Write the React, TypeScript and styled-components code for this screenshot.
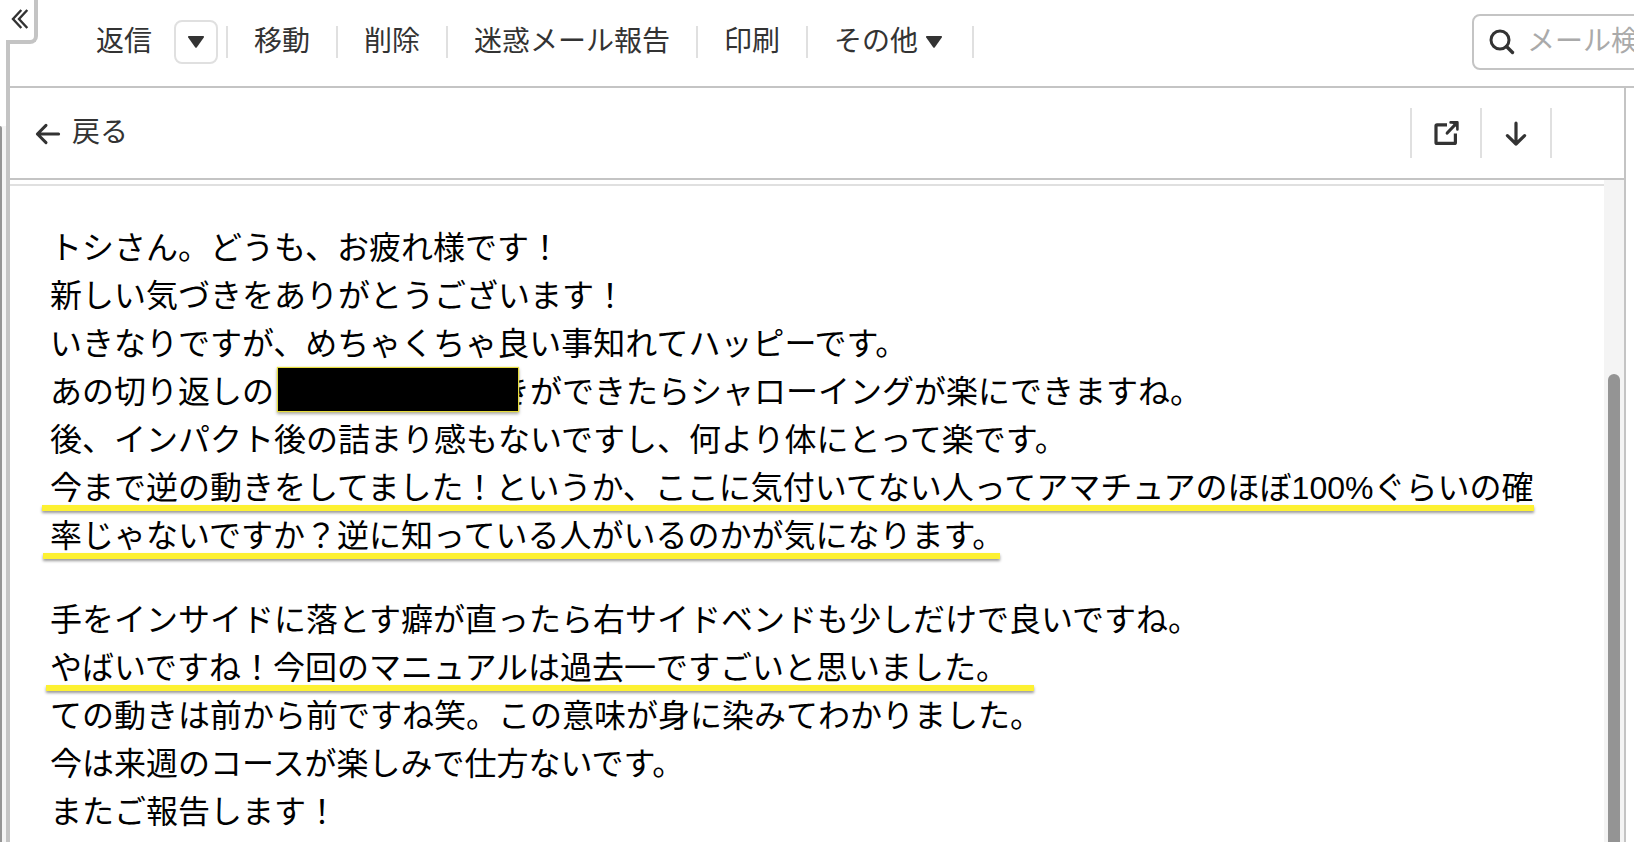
import React from "react";
import styled, { createGlobalStyle } from "styled-components";

const line = "#c4c4c4";
const faint = "#e0e0e0";
const ink = "#333333";

const GlobalStyle = createGlobalStyle`
  *, *::before, *::after { box-sizing: border-box; }
  body {
    margin: 0;
    background: #fff;
    overflow: hidden;
    font-family: "Liberation Sans", "Noto Sans CJK JP", sans-serif;
  }
`;

const Page = styled.div`
  position: relative;
  display: flex;
  height: 100vh;
  overflow: hidden;
`;

const FolderRail = styled.aside`
  flex: 0 0 6px;
  display: flex;
  padding-top: 126px;
`;

const FolderThumb = styled.div`
  flex: 0 0 2px;
  background: #949494;
  border-top-right-radius: 2px;
`;

const FolderTrack = styled.div`
  flex: 1;
  background: #f4f4f4;
`;

const CollapseButton = styled.button`
  position: absolute;
  top: 0;
  left: 6px;
  z-index: 1;
  width: 32px;
  height: 44px;
  padding: 0 4px 2px 5px;
  border: 0 solid ${line};
  border-width: 0 4px 4px 0;
  border-bottom-right-radius: 8px;
  background: #fff;
  color: ${ink};
  svg { display: block; }
`;

const Main = styled.main`
  flex: 1;
  min-width: 0;
  display: flex;
  flex-direction: column;
  border-left: 4px solid ${line};
`;

const Toolbar = styled.header`
  flex: 0 0 88px;
  display: flex;
  align-items: center;
  padding: 0 0 2px 60px;
  border-bottom: 2px solid ${line};
`;

const ToolButton = styled.button<{ $menu?: boolean }>`
  display: flex;
  align-items: center;
  gap: 8px;
  padding: 0 ${(p) => (p.$menu ? 30 : 26)}px 0 26px;
  border: 0;
  background: none;
  color: ${ink};
  font: inherit;
  font-size: 28px;
  line-height: 40px;
  white-space: nowrap;
`;

const Divider = styled.span<{ $height: number }>`
  flex: 0 0 2px;
  height: ${(p) => p.$height}px;
  background: ${faint};
`;

const MenuButton = styled.button`
  display: flex;
  align-items: center;
  justify-content: center;
  width: 44px;
  height: 44px;
  margin: 0 8px 0 -4px;
  padding: 0;
  border: 2px solid ${faint};
  border-radius: 8px;
  background: #fff;
  color: ${ink};
`;

const SearchSlot = styled.div`
  flex: 0 0 162px;
  margin-left: auto;
  overflow: hidden;
`;

const SearchBox = styled.label`
  display: flex;
  align-items: center;
  gap: 12px;
  width: 400px;
  height: 56px;
  padding: 0 15px;
  border: 2px solid ${line};
  border-radius: 8px;
  color: ${ink};
`;

const SearchInput = styled.input`
  flex: 1;
  min-width: 0;
  height: 40px;
  padding: 0;
  border: 0;
  outline: 0;
  background: none;
  font: inherit;
  font-size: 28px;
  line-height: 40px;
  &::placeholder { color: #aaa; opacity: 1; }
`;

const Reader = styled.section`
  flex: 1;
  min-height: 0;
  display: flex;
  flex-direction: column;
  margin-right: 8px;
  border-right: 2px solid ${line};
`;

const ReaderBar = styled.div`
  flex: 0 0 92px;
  display: flex;
  align-items: center;
  justify-content: space-between;
  padding: 0 72px 0 24px;
  border-bottom: 2px solid ${line};
`;

const BackLink = styled.a`
  display: flex;
  align-items: center;
  gap: 10px;
  color: ${ink};
  font-size: 28px;
  line-height: 40px;
  text-decoration: none;
  svg { margin-top: 2px; }
`;

const Actions = styled.div`
  display: flex;
  align-items: center;
`;

const IconButton = styled.button`
  display: flex;
  align-items: center;
  justify-content: center;
  width: 68px;
  height: 50px;
  padding: 0;
  border: 0;
  background: none;
  color: ${ink};
`;

const ScrollArea = styled.div`
  flex: 1;
  min-height: 0;
  display: flex;
`;

const Message = styled.article`
  flex: 1;
  min-width: 0;
  margin-top: 4px;
  padding: 38px 40px;
  border-top: 2px solid ${faint};
  color: #000;
  font-size: 32px;
  line-height: 48px;
  white-space: nowrap;
`;

const Paragraph = styled.p`
  margin: 0 0 36px;
`;

const Row = styled.span`
  display: block;
`;

const Marked = styled.span<{ $before: number; $after: number }>`
  position: relative;
  display: table;
  &::after {
    content: "";
    position: absolute;
    bottom: 1px;
    left: -${(p) => p.$before}px;
    right: ${(p) => -p.$after}px;
    height: 6px;
    background: #fdf132;
    box-shadow: 0 2px 3px rgba(0, 0, 0, 0.4);
  }
`;

const Redacted = styled.span`
  position: relative;
  display: inline-block;
  padding-left: 224px;
  vertical-align: top;
  &::after {
    content: "";
    position: absolute;
    top: -1px;
    left: 3px;
    right: 11px;
    height: 45px;
    border: 1px solid #e6dc3c;
    background: #000;
    box-shadow: 0 0 1px #e6dc3c, 0 2px 3px rgba(0, 0, 0, 0.35);
  }
`;

const ScrollTrack = styled.div`
  flex: 0 0 20px;
  display: flex;
  padding: 194px 4px 0;
  background: #f4f4f4;
`;

const ScrollThumb = styled.div`
  flex: 1;
  border-radius: 6px 6px 0 0;
  background: #949494;
`;

const Caret = () => (
  <svg width="16" height="12" viewBox="0 0 16 12" fill="currentColor" aria-hidden="true">
    <path d="M0.8 0H15.2C16 0 16.2 0.8 15.8 1.4L8.9 11.2Q8 12.3 7.1 11.2L0.2 1.4C-0.2 0.8 0 0 0.8 0Z" />
  </svg>
);

const stroke = {
  fill: "none",
  stroke: "currentColor",
  strokeLinecap: "round" as const,
  strokeLinejoin: "round" as const,
  "aria-hidden": true,
};

const tools = ["移動", "削除", "迷惑メール報告", "印刷"];

export default function App() {
  return (
    <>
      <GlobalStyle />
      <Page>
        <FolderRail>
          <FolderThumb />
          <FolderTrack />
        </FolderRail>
        <CollapseButton aria-label="フォルダを閉じる">
          <svg width="18" height="20" viewBox="0 0 18 20" {...stroke} strokeWidth="2.4" strokeLinecap="butt" strokeLinejoin="miter">
            <path d="M10.3 1L2 10L10.3 19M16.3 1L8 10L16.3 19" />
          </svg>
        </CollapseButton>
        <Main>
          <Toolbar>
            <ToolButton>返信</ToolButton>
            <MenuButton aria-label="返信メニュー">
              <Caret />
            </MenuButton>
            <Divider $height={32} />
            {tools.map((name) => (
              <React.Fragment key={name}>
                <ToolButton>{name}</ToolButton>
                <Divider $height={32} />
              </React.Fragment>
            ))}
            <ToolButton $menu>
              その他
              <Caret />
            </ToolButton>
            <Divider $height={32} />
            <SearchSlot>
              <SearchBox>
                <svg width="26" height="26" viewBox="0 0 26 26" {...stroke} strokeWidth="3">
                  <circle cx="11" cy="11" r="9" />
                  <path d="M17.5 17.5L23.5 23.5" strokeWidth="3.4" />
                </svg>
                <SearchInput type="text" placeholder="メール検索" aria-label="メール検索" />
              </SearchBox>
            </SearchSlot>
          </Toolbar>
          <Reader>
            <ReaderBar>
              <BackLink href="#list">
                <svg width="28" height="24" viewBox="0 0 28 24" {...stroke} strokeWidth="3">
                  <path d="M24.6 12H3.4M12 3.4L3.4 12L12 20.6" />
                </svg>
                戻る
              </BackLink>
              <Actions>
                <Divider $height={50} />
                <IconButton aria-label="別ウィンドウで開く">
                  <svg width="26" height="26" viewBox="0 0 26 26" {...stroke} strokeWidth="3.2">
                    <path d="M14 4.8H4Q3 4.8 3 5.8V22.4Q3 23.4 4 23.4H21.4Q22.4 23.4 22.4 22.4V13.4" strokeLinecap="butt" />
                    <path d="M14.2 13L22.8 4" />
                    <path d="M17.6 2.4H24.4V9.4" strokeWidth="2.6" />
                    <path d="M18.5 2.4H24.4V8.3Z" fill="currentColor" stroke="none" />
                  </svg>
                </IconButton>
                <Divider $height={50} />
                <IconButton aria-label="次のメール">
                  <svg width="24" height="28" viewBox="0 0 24 28" {...stroke} strokeWidth="3.2">
                    <path d="M12 4.2V25M3.4 16.6L12 25L20.6 16.6" />
                  </svg>
                </IconButton>
                <Divider $height={50} />
              </Actions>
            </ReaderBar>
            <ScrollArea>
              <Message>
                <Paragraph>
                  <Row>トシさん。どうも、お疲れ様です！</Row>
                  <Row>新しい気づきをありがとうございます！</Row>
                  <Row>いきなりですが、めちゃくちゃ良い事知れてハッピーです。</Row>
                  <Row>
                    あの切り返しの<Redacted>き</Redacted>ができたらシャローイングが楽にできますね。
                  </Row>
                  <Row>後、インパクト後の詰まり感もないですし、何より体にとって楽です。</Row>
                  <Marked $before={8} $after={1}>
                    今まで逆の動きをしてました！というか、ここに気付いてない人ってアマチュアのほぼ100%ぐらいの確
                  </Marked>
                  <Marked $before={7} $after={-4}>
                    率じゃないですか？逆に知っている人がいるのかが気になります。
                  </Marked>
                </Paragraph>
                <Paragraph>
                  <Row>手をインサイドに落とす癖が直ったら右サイドベンドも少しだけで良いですね。</Row>
                  <Marked $before={4} $after={26}>
                    やばいですね！今回のマニュアルは過去一ですごいと思いました。
                  </Marked>
                  <Row>ての動きは前から前ですね笑。この意味が身に染みてわかりました。</Row>
                  <Row>今は来週のコースが楽しみで仕方ないです。</Row>
                  <Row>またご報告します！</Row>
                </Paragraph>
              </Message>
              <ScrollTrack>
                <ScrollThumb />
              </ScrollTrack>
            </ScrollArea>
          </Reader>
        </Main>
      </Page>
    </>
  );
}
